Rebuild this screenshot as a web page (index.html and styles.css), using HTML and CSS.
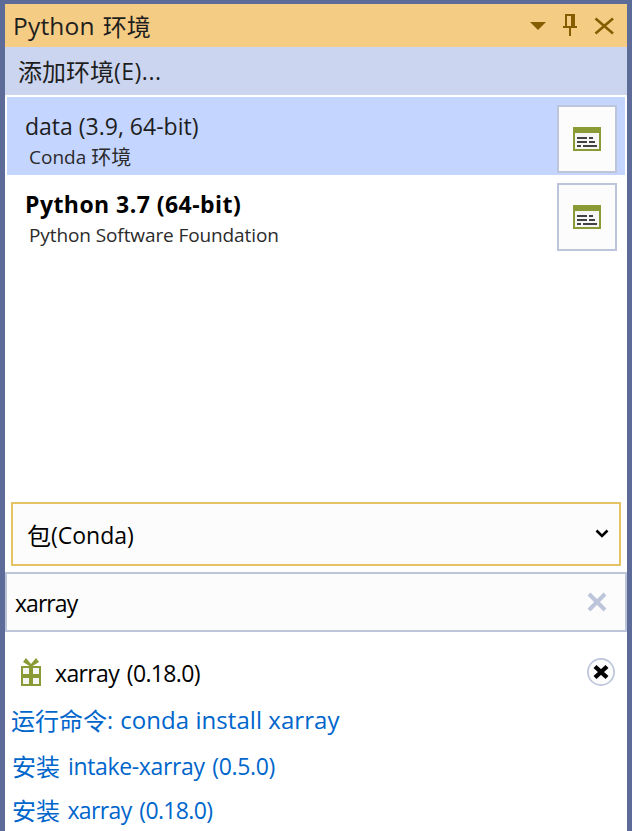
FILE: index.html
```html
<!DOCTYPE html>
<html lang="zh-CN">
<head>
<meta charset="utf-8">
<title>Python 环境</title>
<link rel="stylesheet" href="styles.css">
</head>
<body>
<main class="panel">
  <header class="titlebar">
    <h1 class="line title"><span class="t-title">Python</span> <span class="zh">环境</span></h1>
    <svg class="title-icons" width="90" height="30" viewBox="0 0 90 30" fill="#855d00">
      <path d="M3 12h16l-8 8z"/>
      <path d="M38 4h10v12h2v2h-6v8h-2v-8h-6v-2h2zM40 6v10h4V6z" fill-rule="evenodd"/>
      <path d="M68.500 8.500L86 23.500M86 8.500L68.500 23.500" fill="none" stroke="#855d00" stroke-width="2.600"/>
    </svg>
  </header>
  <nav class="toolbar"><a class="line"><span class="zh">添加环境</span><span class="t-add">(E)...</span></a></nav>
  <section class="environments">
    <article class="env selected">
      <div class="env-text">
        <div class="line">data (3.9, 64-bit)</div>
        <div class="line small">Conda <span class="zh">环境</span></div>
      </div>
      <button class="open"><svg width="28" height="24" viewBox="0 0 28 24"><path fill="#8a9a35" d="M0 0h28v24H0z"/><path fill="#f6f6f6" d="M2 6h24v16H2z"/><path fill="#424242" d="M4 10h10v2H4zM16 10h4v2h-4zM4 14h10v2H4zM16 14h6v2h-6zM4 18h4v2H4zM10 18h14v2H10z"/></svg></button>
    </article>
    <article class="env">
      <div class="env-text">
        <div class="line bold">Python 3.7 (64-bit)</div>
        <div class="line small t-psf">Python Software Foundation</div>
      </div>
      <button class="open"><svg width="28" height="24" viewBox="0 0 28 24"><path fill="#8a9a35" d="M0 0h28v24H0z"/><path fill="#f6f6f6" d="M2 6h24v16H2z"/><path fill="#424242" d="M4 10h10v2H4zM16 10h4v2h-4zM4 14h10v2H4zM16 14h6v2h-6zM4 18h4v2H4zM10 18h14v2H10z"/></svg></button>
    </article>
  </section>
  <div class="combo">
    <div class="line"><span class="zh">包</span>(Conda)</div>
    <svg width="14" height="10" viewBox="0 0 14 10"><path d="M1.500 1.500L7 7L12.500 1.500" fill="none" stroke="#000" stroke-width="2.600"/></svg>
  </div>
  <div class="search">
    <div class="line t-search">xarray</div>
    <svg width="20" height="20" viewBox="0 0 20 20"><path d="M2 2L18 18M18 2L2 18" fill="none" stroke="#bdc5db" stroke-width="4"/></svg>
  </div>
  <section class="results">
    <div class="package">
      <svg class="gift" width="20" height="28" viewBox="0 0 20 28"><path fill="#8a9a35" fill-rule="evenodd" d="M0 8h8.500L2 4L5 0l5 6l5-6l3 4l-6.500 4H20v20H0zM2 10v6h6v-6zM12 10v6h6v-6zM2 20v6h6v-6zM12 20v6h6v-6z"/><path fill="#f6f6f6" d="M2 10h6v6H2zM12 10h6v6h-6zM2 20h6v6H2zM12 20h6v6h-6z"/></svg>
      <div class="line t-pkg">xarray (0.18.0)</div>
      <svg class="remove" width="28" height="28" viewBox="0 0 28 28"><circle cx="14" cy="14" r="13.100" fill="#fcfcfc" stroke="#bdc5db" stroke-width="1.700"/><path d="M8 8.500L20 19.500M20 8.500L8 19.500" stroke="#000" stroke-width="4.400"/></svg>
    </div>
    <a class="line link command"><span class="zh">运行命令</span>: <span class="t-command">conda install xarray</span></a>
    <a class="line link first"><span class="zh">安装</span> <span class="t-intake">intake-xarray (0.5.0)</span></a>
    <a class="line link second"><span class="zh">安装</span> <span class="t-pkg">xarray (0.18.0)</span></a>
  </section>
</main>
</body>
</html>
```

FILE: styles.css
```css
* { box-sizing: border-box; }
body {
  margin: 0;
  background: #5d6b99;
  font-family: "Open Sans", "Noto Sans CJK SC", sans-serif;
  font-size: 23px;
  color: #1e1e1e;
}
.panel {
  height: 831px;
  padding: 4px 5px 0;
  overflow: hidden;
}
.line {
  display: block;
  margin: 0;
  font-size: 23px;
  font-weight: 400;
  line-height: 32px;
  white-space: nowrap;
}
.zh { font-size: 24px; line-height: 1; vertical-align: -1px; }
.title { word-spacing: 2px; }
.t-title { font-size: 24.5px; letter-spacing: .2px; line-height: 1; }
.t-add { letter-spacing: .5px; }
.t-psf { letter-spacing: -.1px; }
.t-search { letter-spacing: -.95px; }
.t-pkg { letter-spacing: -.65px; word-spacing: 2.5px; }
.t-intake { letter-spacing: -.35px; word-spacing: 2px; }
.t-command { font-size: 24px; letter-spacing: .05px; line-height: 1; }
.titlebar {
  display: flex;
  justify-content: space-between;
  height: 43px;
  padding: 6px 10px 0 8px;
  background: #f5cc84;
}
.toolbar {
  height: 48px;
  padding: 8px 13px;
  background: #ccd5f0;
}
.environments {
  height: 407px;
  padding: 2px 2px 0;
  background: #fff;
}
.env {
  display: flex;
  justify-content: space-between;
  height: 78px;
  padding: 8px 8px 0 18px;
  color: #000;
}
.selected { background: #c4d5ff; color: #1e1e1e; }
.env-text { padding-top: 5px; }
.small {
  margin: 3px 0 0 4px;
  font-size: 19px;
  line-height: 24px;
  color: #2b2b2b;
}
.small .zh { font-size: 20px; }
.bold { font-weight: 700; letter-spacing: .45px; }
.open {
  display: flex;
  align-items: center;
  justify-content: center;
  width: 60px;
  height: 68px;
  padding: 0;
  border: 2px solid #bdc5db;
  background: #fcfcfc;
}
.combo {
  display: flex;
  justify-content: space-between;
  height: 64px;
  padding: 15px 10px 0 14px;
  border: 2px solid #e5c365;
  background: #fcfcfc;
  outline: 6px solid #fff;
  margin: 0 6px;
  color: #000;
}
.combo svg { margin-top: 10px; }
.search {
  position: relative;
  display: flex;
  justify-content: space-between;
  height: 60px;
  margin-top: 6px;
  padding: 13px 18px 0 8px;
  border: 2px solid #bdc5db;
  background: #fcfcfc;
  color: #000;
}
.search svg { margin-top: 5px; }
.results {
  height: 199px;
  padding-top: 25px;
  background: #fff;
}
.package {
  display: flex;
  height: 32px;
  padding: 0 12px 0 16px;
  color: #000;
}
.gift { margin: 1px 14px 0 0; }
.remove { margin: 1px 0 0 auto; }
.link { color: #0066cc; }
.command { margin: 15px 0 0 6px; word-spacing: 1.2px; }
.command .t-command { word-spacing: 0; }
.first { margin: 14px 0 0 7px; word-spacing: 2px; }
.second { margin: 12px 0 0 7px; word-spacing: 1.5px; }
```
